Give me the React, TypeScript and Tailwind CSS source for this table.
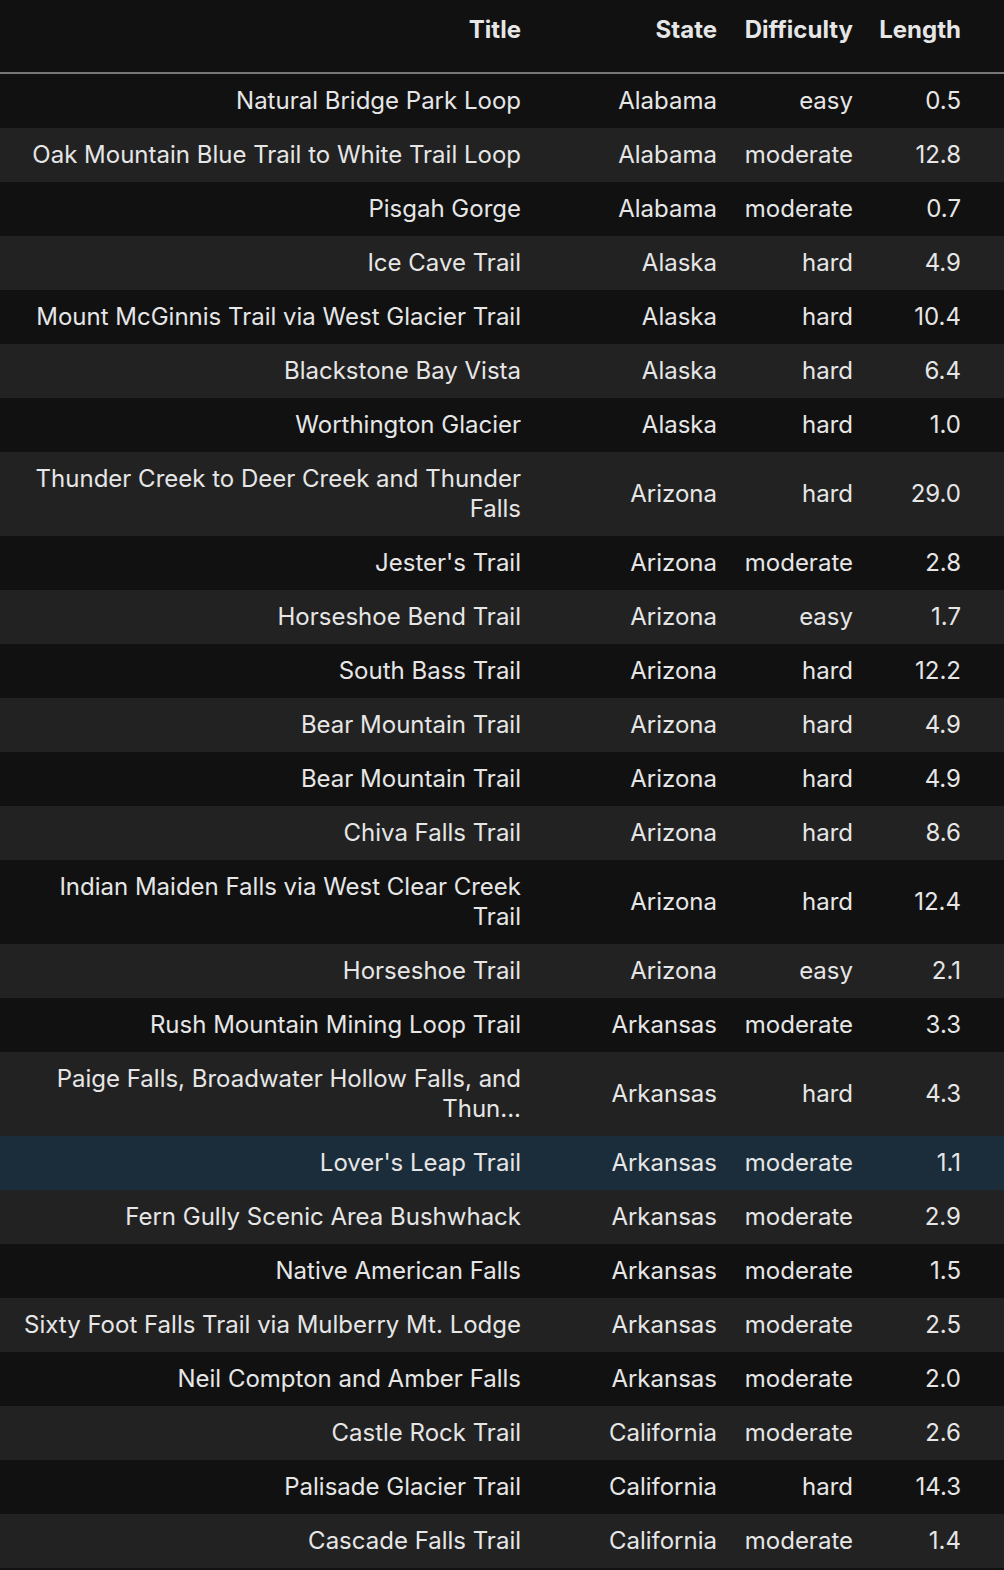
const rows: [string, string, string, string][] = [
  ["Natural Bridge Park Loop", "Alabama", "easy", "0.5"],
  ["Oak Mountain Blue Trail to White Trail Loop", "Alabama", "moderate", "12.8"],
  ["Pisgah Gorge", "Alabama", "moderate", "0.7"],
  ["Ice Cave Trail", "Alaska", "hard", "4.9"],
  ["Mount McGinnis Trail via West Glacier Trail", "Alaska", "hard", "10.4"],
  ["Blackstone Bay Vista", "Alaska", "hard", "6.4"],
  ["Worthington Glacier", "Alaska", "hard", "1.0"],
  ["Thunder Creek to Deer Creek and Thunder Falls", "Arizona", "hard", "29.0"],
  ["Jester's Trail", "Arizona", "moderate", "2.8"],
  ["Horseshoe Bend Trail", "Arizona", "easy", "1.7"],
  ["South Bass Trail", "Arizona", "hard", "12.2"],
  ["Bear Mountain Trail", "Arizona", "hard", "4.9"],
  ["Bear Mountain Trail", "Arizona", "hard", "4.9"],
  ["Chiva Falls Trail", "Arizona", "hard", "8.6"],
  ["Indian Maiden Falls via West Clear Creek Trail", "Arizona", "hard", "12.4"],
  ["Horseshoe Trail", "Arizona", "easy", "2.1"],
  ["Rush Mountain Mining Loop Trail", "Arkansas", "moderate", "3.3"],
  ["Paige Falls, Broadwater Hollow Falls, and Thun...", "Arkansas", "hard", "4.3"],
  ["Lover's Leap Trail", "Arkansas", "moderate", "1.1"],
  ["Fern Gully Scenic Area Bushwhack", "Arkansas", "moderate", "2.9"],
  ["Native American Falls", "Arkansas", "moderate", "1.5"],
  ["Sixty Foot Falls Trail via Mulberry Mt. Lodge", "Arkansas", "moderate", "2.5"],
  ["Neil Compton and Amber Falls", "Arkansas", "moderate", "2.0"],
  ["Castle Rock Trail", "California", "moderate", "2.6"],
  ["Palisade Glacier Trail", "California", "hard", "14.3"],
  ["Cascade Falls Trail", "California", "moderate", "1.4"],
];

export default function App() {
  return (
    <div className="min-h-[1570px] w-[1004px] bg-[#111111] font-['Inter',sans-serif] text-[24px] leading-[30px] text-[#e6e6e6]">
      <table className="w-[1004px] table-fixed border-collapse text-right">
        <colgroup>
          <col className="w-[533px]" />
          <col className="w-[196px]" />
          <col className="w-[136px]" />
          <col className="w-[139px]" />
        </colgroup>
        <thead>
          <tr className="h-[72px] border-b-2 border-[#777777]">
            <th className="px-3 pt-[15px] pb-[27px] font-bold">Title</th>
            <th className="px-3 pt-[15px] pb-[27px] font-bold">State</th>
            <th className="px-3 pt-[15px] pb-[27px] font-bold">Difficulty</th>
            <th className="pl-3 pr-[43px] pt-[15px] pb-[27px] font-bold">Length</th>
          </tr>
        </thead>
        <tbody>
          {rows.map((r, i) => {
            const bg =
              i === 18 ? "bg-[#1b2d3a]" : i % 2 === 1 ? "bg-[#222222]" : "bg-[#111111]";
            return (
              <tr key={i} className={bg}>
                <td className="px-3 py-3 align-middle">{r[0]}</td>
                <td className="px-3 py-3 align-middle">{r[1]}</td>
                <td className="px-3 py-3 align-middle">{r[2]}</td>
                <td className="pl-3 pr-[43px] py-3 align-middle">{r[3]}</td>
              </tr>
            );
          })}
        </tbody>
      </table>
    </div>
  );
}
